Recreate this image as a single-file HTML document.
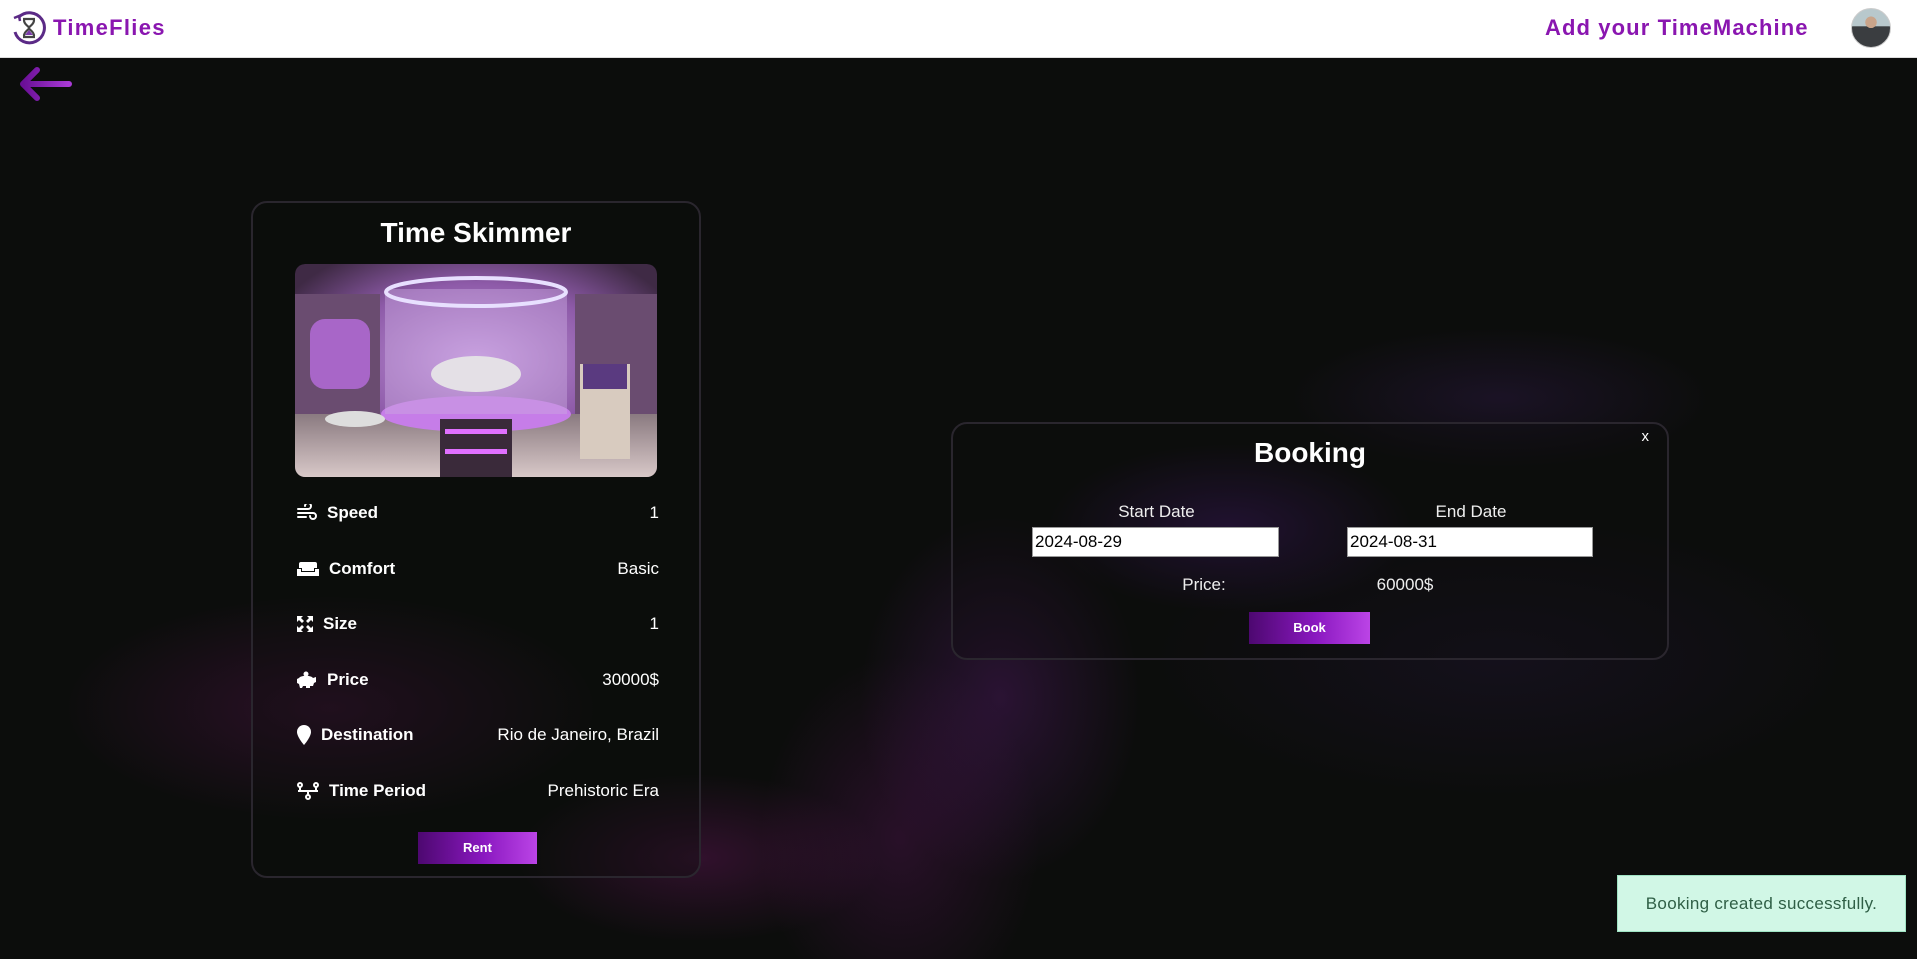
<!DOCTYPE html>
<html><head><meta charset="utf-8"><style>
*{box-sizing:border-box;margin:0;padding:0}
body{width:1917px;height:959px;overflow:hidden;background:#0c0d0c;font-family:"Liberation Sans",sans-serif;position:relative}
.hdr{position:absolute;left:0;top:0;width:1917px;height:58px;background:#fff;border-bottom:1px solid #ddd}
.bg{position:absolute;left:0;top:58px;width:1917px;height:901px;
background:
radial-gradient(ellipse 260px 120px at 1230px 470px,rgba(120,40,200,.28),transparent 70%),
radial-gradient(ellipse 200px 260px at 1000px 640px,rgba(150,40,190,.22),transparent 70%),
radial-gradient(ellipse 300px 100px at 1500px 340px,rgba(110,50,180,.15),transparent 70%),
radial-gradient(ellipse 380px 160px at 330px 650px,rgba(170,30,150,.2),transparent 70%),
radial-gradient(ellipse 260px 120px at 700px 800px,rgba(180,30,160,.22),transparent 70%),
radial-gradient(ellipse 200px 260px at 900px 780px,rgba(170,30,170,.18),transparent 70%),
radial-gradient(ellipse 500px 200px at 1500px 600px,rgba(80,40,140,.12),transparent 70%)}
.card{position:absolute;left:251px;top:201px;width:450px;height:677px;border:2px solid #2a262e;border-radius:16px;background:rgba(12,13,12,.35)}
.title{position:absolute;left:0;width:100%;text-align:center;color:#fff;font-size:28px;font-weight:bold}
.row{position:absolute;left:44px;width:362px;height:24px;color:#fff;font-size:17px}
.row .l{position:absolute;left:0;top:0;display:flex;align-items:center;font-weight:bold;height:24px}
.row .l svg{margin-right:10px}
.row .v{position:absolute;right:0;top:0;line-height:24px}
.btn{position:absolute;background:linear-gradient(90deg,#4d0870,#8a18c0 55%,#bb44e6);color:#fff;font-weight:bold;font-size:13px;text-align:center}
.modal{position:absolute;left:951px;top:422px;width:718px;height:238px;border:2px solid #2a262e;border-radius:16px;background:rgba(12,13,12,.3)}
.inp{position:absolute;height:30px;background:#fff;border:1px solid #999;font-size:17px;color:#000;line-height:28px;padding-left:2px}
.lbl{position:absolute;color:#eee;font-size:17px;text-align:center}
</style></head><body>
<div class="hdr">
<svg style="position:absolute;left:11px;top:10px" width="36" height="36" viewBox="0 0 36 36"><path d="M8 7 A15 15 0 1 1 4 22" fill="none" stroke="#5b2a86" stroke-width="3"/><path d="M3 8l5-2 1 5" fill="none" stroke="#5b2a86" stroke-width="2.5"/><path d="M12 9h12M12 27h12M13 10c0 5 5 6 5 8s-5 3-5 8M23 10c0 5-5 6-5 8s5 3 5 8" fill="none" stroke="#444" stroke-width="2.2"/><path d="M14 25l4-5 4 5z" fill="#7a3aaa"/></svg>
<div style="position:absolute;left:53px;top:15px;font-size:22px;font-weight:bold;color:#8a16b0;letter-spacing:1.3px">TimeFlies</div>
<div style="position:absolute;left:1545px;top:15px;font-size:22px;font-weight:bold;color:#8a16b0;letter-spacing:1.1px">Add your TimeMachine</div>
<div style="position:absolute;left:1851px;top:8px;width:40px;height:40px;border-radius:50%;background:radial-gradient(circle at 50% 35%,#c9a48a 0 18%,transparent 19%),linear-gradient(180deg,#b8c8cc 0 45%,#3a3d40 46%);border:1px solid #ccc"></div>
</div>
<div class="bg"></div>
<svg style="position:absolute;left:17px;top:66px" width="58" height="36" viewBox="0 0 58 36"><defs><linearGradient id="ag" x1="0" x2="1"><stop offset="0" stop-color="#6a0f96"/><stop offset="1" stop-color="#a93ad6"/></linearGradient></defs><path d="M52 18H6M20 4L6 18l14 14" fill="none" stroke="url(#ag)" stroke-width="6" stroke-linecap="round" stroke-linejoin="round"/></svg>

<div class="card">
<div class="title" style="top:14px">Time Skimmer</div>
<svg style="position:absolute;left:42px;top:61px;border-radius:10px" width="362" height="213" viewBox="0 0 362 213"><defs><radialGradient id="rg" cx=".5" cy=".45" r=".6"><stop offset="0" stop-color="#c79be0"/><stop offset=".6" stop-color="#8d5aa8"/><stop offset="1" stop-color="#3f2a45"/></radialGradient><linearGradient id="fl" x1="0" y1="0" x2="0" y2="1"><stop offset="0" stop-color="#8a7a80"/><stop offset="1" stop-color="#d8c8c8"/></linearGradient></defs><rect width="362" height="213" rx="10" fill="url(#rg)"/><rect x="0" y="150" width="362" height="63" fill="url(#fl)"/><rect x="0" y="30" width="85" height="120" fill="#6a4c70"/><rect x="280" y="30" width="82" height="120" fill="#6a4c70"/><rect x="15" y="55" width="60" height="70" rx="15" fill="#a866c8"/><ellipse cx="181" cy="150" rx="95" ry="18" fill="#c67de8"/><rect x="90" y="25" width="182" height="125" fill="#c9a8e0" opacity=".45"/><ellipse cx="181" cy="28" rx="90" ry="14" fill="none" stroke="#e8e0ff" stroke-width="4"/><ellipse cx="181" cy="110" rx="45" ry="18" fill="#e4e0e6"/><rect x="145" y="155" width="72" height="58" fill="#3a2a3a"/><rect x="150" y="165" width="62" height="5" fill="#e070ff"/><rect x="150" y="185" width="62" height="5" fill="#e070ff"/><ellipse cx="60" cy="155" rx="30" ry="8" fill="#ddd"/><rect x="285" y="100" width="50" height="95" fill="#d8cbbf"/><rect x="288" y="100" width="44" height="25" fill="#5a3a80"/></svg>
<div class="row" style="top:298px"><span class="l"><svg width="20" height="18" viewBox="0 0 20 18" fill="none" stroke="#fff" stroke-width="2" stroke-linecap="round"><path d="M1 5h10a3 3 0 1 0-3-3M1 9h15a3 3 0 1 1-3 3M1 13h8"/></svg>Speed</span><span class="v">1</span></div>
<div class="row" style="top:354px"><span class="l"><svg width="22" height="16" viewBox="0 0 22 16" fill="#fff"><path d="M4 1h14a2 2 0 0 1 2 2v4h-3v3H5V7H2V3a2 2 0 0 1 2-2zM0 8h4v3h14V8h4v7H0z"/></svg>Comfort</span><span class="v">Basic</span></div>
<div class="row" style="top:409px"><span class="l"><svg width="16" height="16" viewBox="0 0 16 16" fill="#fff"><path d="M0 0h6L4 2l3 3-2 2-3-3-2 2zM16 0v6l-2-2-3 3-2-2 3-3-2-2zM0 16v-6l2 2 3-3 2 2-3 3 2 2zM16 16h-6l2-2-3-3 2-2 3 3 2-2z"/></svg>Size</span><span class="v">1</span></div>
<div class="row" style="top:465px"><span class="l"><svg width="20" height="18" viewBox="0 0 20 18" fill="#fff"><circle cx="9" cy="3" r="2.5"/><path d="M2 7c2-3 12-3 14 0l3-1v5l-2 1-1 3h-3v2H9v-2H6l-1 2H3l-1-4-2-1V8z"/></svg>Price</span><span class="v">30000$</span></div>
<div class="row" style="top:520px"><span class="l"><svg width="14" height="20" viewBox="0 0 14 20" fill="#fff"><path d="M7 0a7 7 0 0 1 7 7c0 5-7 13-7 13S0 12 0 7a7 7 0 0 1 7-7z"/></svg>Destination</span><span class="v">Rio de Janeiro, Brazil</span></div>
<div class="row" style="top:576px"><span class="l"><svg width="22" height="18" viewBox="0 0 22 18" fill="none" stroke="#fff" stroke-width="2"><circle cx="3" cy="3" r="2"/><circle cx="19" cy="3" r="2"/><circle cx="11" cy="15" r="2"/><path d="M1 9h20M11 9v4M3 5v4M19 5v4"/></svg>Time Period</span><span class="v">Prehistoric Era</span></div>
<div class="btn" style="left:165px;top:629px;width:119px;height:32px;line-height:32px">Rent</div>
</div>

<div class="modal">
<div style="position:absolute;right:18px;top:4px;color:#fff;font-size:15px">x</div>
<div class="title" style="top:13px">Booking</div>
<div class="lbl" style="left:80px;width:247px;top:78px">Start Date</div>
<div class="lbl" style="left:395px;width:246px;top:78px">End Date</div>
<div class="inp" style="left:79px;top:103px;width:247px">2024-08-29</div>
<div class="inp" style="left:394px;top:103px;width:246px">2024-08-31</div>
<div class="lbl" style="left:228px;width:46px;top:151px">Price:</div>
<div class="lbl" style="left:417px;width:70px;top:151px">60000$</div>
<div class="btn" style="left:296px;top:188px;width:121px;height:32px;line-height:32px">Book</div>
</div>

<div style="position:absolute;left:1617px;top:875px;width:289px;height:57px;background:#d1f7e6;border:1px solid #9fe3c4;color:#2f5f46;font-size:17px;line-height:55px;text-align:center;letter-spacing:.3px">Booking created successfully.</div>
</body></html>
